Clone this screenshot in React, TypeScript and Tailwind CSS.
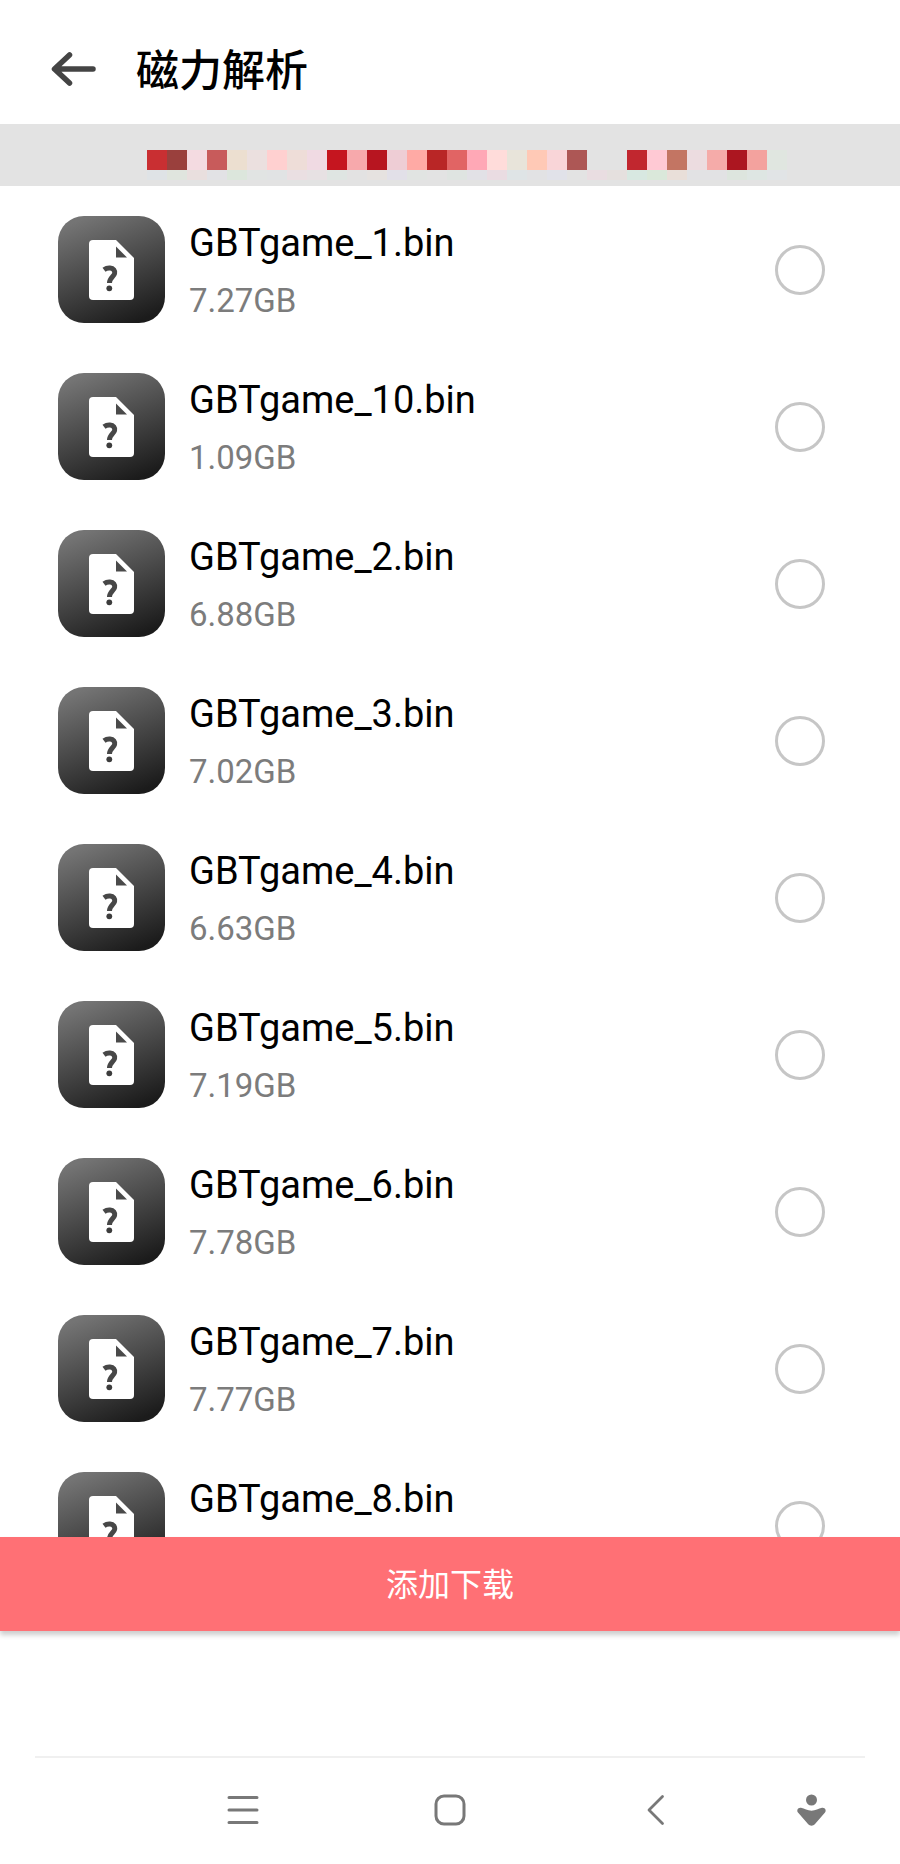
import { useState } from "react"

type FileItem = {
  name: string
  size: string
}

const Files: FileItem[] = [
  { name: "GBTgame_1.bin", size: "7.27GB" },
  { name: "GBTgame_10.bin", size: "1.09GB" },
  { name: "GBTgame_2.bin", size: "6.88GB" },
  { name: "GBTgame_3.bin", size: "7.02GB" },
  { name: "GBTgame_4.bin", size: "6.63GB" },
  { name: "GBTgame_5.bin", size: "7.19GB" },
  { name: "GBTgame_6.bin", size: "7.78GB" },
  { name: "GBTgame_7.bin", size: "7.77GB" },
  { name: "GBTgame_8.bin", size: "" },
]

// pixelated torrent title, top row and the faint row under it
const MosaicTop: string[] = [
  "#c92f32", "#9a403d", "#f4dbe1", "#c85b5b", "#ecdfd0", "#ebe0df", "#ffd0d0", "#eeddd8",
  "#f0dae3", "#c5151f", "#f7a9ac", "#b71520", "#eecdd5", "#ffaaa5", "#b92626", "#e16464",
  "#ffa8b6", "#ffdcda", "#e8e4da", "#ffc9b6", "#f9d5d8", "#ad5755", "#e3e3e3", "#e3e3e3",
  "#c1272f", "#ffc9d4", "#c37563", "#ecdce0", "#f5aba9", "#ac1620", "#f3a29e", "#e0e6e0",
]

const MosaicBottom: string[] = [
  "#dfe3e6", "#e0e5de", "#e9dfde", "#e2e2e5", "#dce6dc", "#e1e4e3", "#e1e3e4", "#eadfe2",
  "#e7e1e3", "#dfe5e2", "#e3e2e2", "#e6e2e0", "#e2e0e8", "#e1e4e2", "#e3e3e3", "#dfe4e1",
  "#e2e1e6", "#eadce2", "#dfe4e6", "#e2e2e4", "#e1e2e9", "#e3e3e3", "#e9dde1", "#e5e0de",
  "#d8e8e1", "#dae8da", "#e9dfd9", "#e2e2e4", "#e2e2e4", "#dde5de", "#dee6e3", "#e1e4e6",
]

function FileIcon() {
  return (
    <svg viewBox="0 0 107 107" className="size-[107px] shrink-0" aria-hidden="true">
      <defs>
        <linearGradient id="tile" x1="0.3" y1="0" x2="0.7" y2="1">
          <stop offset="0" stopColor="#747474" />
          <stop offset="1" stopColor="#1b1b1b" />
        </linearGradient>
      </defs>
      <rect width="107" height="107" rx="26" fill="url(#tile)" />
      <path d="M35 24h23L76 42v38a4 4 0 0 1-4 4H35a4 4 0 0 1-4-4V28a4 4 0 0 1 4-4Z" fill="#fff" />
      <path d="M58 30.500v11h11Z" fill="#4a4a4a" />
      <path d="M46 53.800c2-1.500 4-2 6-1.800 3.500.3 5.200 2.800 4.600 5.500-.8 3.300-5.100 4-5.100 9.500" fill="none" stroke="#474747" strokeWidth="5" />
      <circle cx="51.300" cy="72.300" r="2.900" fill="#3c3c3c" />
    </svg>
  )
}

function FileRow({ file }: { file: FileItem }) {
  return (
    <li>
      <label className="flex h-[157px] items-center pr-[75px] pl-[58px]">
        <FileIcon />
        <span className="ml-6 flex h-[107px] min-w-0 flex-1 flex-col">
          <span className="text-[38px] leading-[54px] text-black">{file.name}</span>
          <span className="mt-[11px] text-[33px] leading-[40px] text-[#7c7c7c]">{file.size}</span>
        </span>
        <input type="checkbox" className="size-[50px] shrink-0 appearance-none rounded-full border-3 border-[#c6c6c6] checked:border-[#ff7075] checked:bg-[#ff7075]" />
      </label>
    </li>
  )
}

function SystemNav() {
  return (
    <nav className="mx-[35px] grid h-[108px] shrink-0 grid-cols-8 border-t-2 border-[#f0f0f0] text-[#787878]">
      <button aria-label="菜单" className="col-span-2 col-start-2 flex items-center justify-center">
        <svg viewBox="0 0 36 36" className="size-9" fill="none" stroke="currentColor" strokeWidth="3" strokeLinecap="round">
          <path d="M4 4.500h28M4 17h28M4 29.500h28" />
        </svg>
      </button>
      <button aria-label="主页" className="col-span-2 flex items-center justify-center">
        <svg viewBox="0 0 36 36" className="size-9" fill="none" stroke="currentColor" strokeWidth="3">
          <rect x="4" y="3" width="28" height="28" rx="8" />
        </svg>
      </button>
      <button aria-label="返回" className="col-span-2 flex items-center justify-center">
        <svg viewBox="0 0 36 36" className="size-9" fill="none" stroke="currentColor" strokeWidth="2.800" strokeLinecap="round" strokeLinejoin="round">
          <path d="M22.500 3.500 9 17l13.500 13.500" />
        </svg>
      </button>
      <button aria-label="助手" className="flex items-center justify-center">
        <svg viewBox="0 0 36 36" className="size-9" fill="currentColor">
          <circle cx="16.500" cy="7" r="5.500" />
          <path d="M6 14.700c3.500.6 6.500 3 10.500 3s7-2.400 10.500-3c3.200-.5 4.800 2.800 2.800 5L20 31c-2 2.300-5 2.300-7 0L3.200 19.700c-2-2.200-.4-5.500 2.800-5Z" />
        </svg>
      </button>
    </nav>
  )
}

export default function App() {
  const [added, setAdded] = useState(false)

  return (
    <div className="flex h-screen flex-col bg-white font-[Roboto,'Noto_Sans_CJK_SC',sans-serif]">
      <header className="flex h-[124px] shrink-0 items-center pt-3.5 pl-12">
        <button aria-label="返回" className="text-[#444]">
          <svg viewBox="0 0 50 50" className="size-[50px]" fill="none" stroke="currentColor" strokeWidth="5.500" strokeLinecap="round" strokeLinejoin="round">
            <path d="M21.500 11 6.500 25l15 14M7 25h38" />
          </svg>
        </button>
        <h1 className="ml-[38px] pb-1 font-['Noto_Sans_CJK_SC',sans-serif] text-[43px] leading-[60px] font-medium text-black">磁力解析</h1>
      </header>

      <div className="flex h-[62px] shrink-0 flex-col items-center bg-[#e3e3e3] pt-[26px] pl-[34px]">
        <div className="flex">
          {MosaicTop.map((color, i) => (
            <span key={i} className="h-5 w-5" style={{ backgroundColor: color }} />
          ))}
        </div>
        <div className="flex">
          {MosaicBottom.map((color, i) => (
            <span key={i} className="h-2.5 w-5" style={{ backgroundColor: color }} />
          ))}
        </div>
      </div>

      <ul className="min-h-0 flex-1 overflow-y-auto pt-[5px] [scrollbar-width:none]">
        {Files.map((file) => (
          <FileRow key={file.name} file={file} />
        ))}
      </ul>

      <button
        onClick={() => setAdded(!added)}
        aria-pressed={added}
        className="mb-[125px] h-[94px] shrink-0 bg-[#ff7075] pb-1 font-['Noto_Sans_CJK_SC',sans-serif] text-[32px] text-white shadow-[0_4px_5px_rgba(0,0,0,0.2)]"
      >
        添加下载
      </button>

      <SystemNav />
    </div>
  )
}
